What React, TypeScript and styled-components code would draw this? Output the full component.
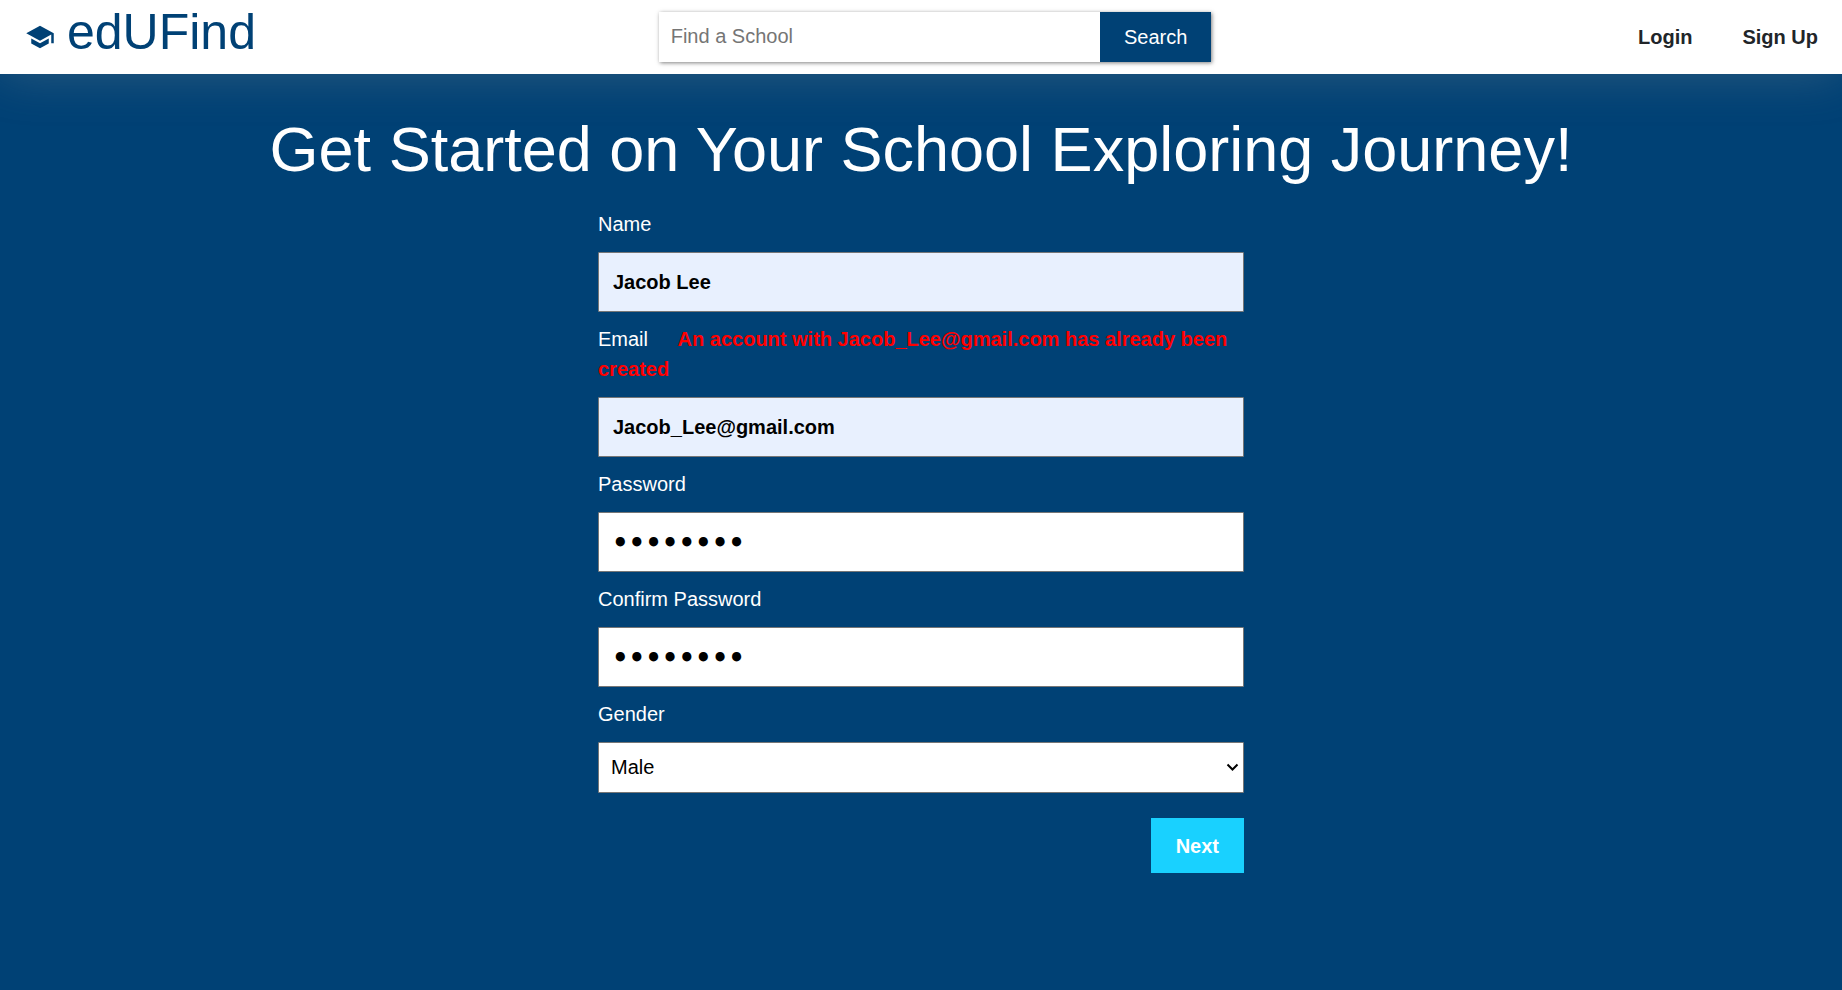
import React from "react";
import styled, { createGlobalStyle } from "styled-components";
import { MdSchool } from "react-icons/md";

const navy = "#004175";
const font = '"Liberation Sans", Arial, Helvetica, sans-serif';

const GlobalStyle = createGlobalStyle`
  *, *::before, *::after { box-sizing: border-box; }
  body {
    margin: 0;
    background: ${navy};
    color: #212529;
    font: 20px/30px ${font};
  }
  button, input, select { font-family: inherit; font-size: inherit; }
`;

const Header = styled.header`
  display: flex;
  align-items: center;
  justify-content: space-between;
  height: 74px;
  background: #fff;
  box-shadow: 0 0 50px rgba(140, 150, 150, 0.32);
`;

const Brand = styled.a`
  display: flex;
  align-items: center;
  gap: 12px;
  padding-left: 25px;
  color: ${navy};
  font-size: 50px;
  line-height: 62px;
  text-decoration: none;

  svg { font-size: 30px; }
`;

const BrandName = styled.span`
  padding-bottom: 10px;
`;

const SearchForm = styled.form`
  display: flex;
  width: 30%;
  height: 50px;
  box-shadow: 1px 1px 4px rgba(0, 0, 0, 0.5);
`;

const SearchInput = styled.input`
  flex: 1;
  min-width: 0;
  padding: 0 12px 2px;
  border: 0;
  background: #fff;

  &::placeholder { color: #757575; }
`;

const SearchButton = styled.button`
  padding: 0 24px;
  border: 0;
  background: ${navy};
  color: #fff;
`;

const Nav = styled.nav`
  display: flex;
  gap: 50px;
  padding: 0 24px;
`;

const NavLink = styled.a`
  color: #212529;
  font-weight: bold;
  text-decoration: none;
`;

const Main = styled.main`
  padding: 27px 20px 60px;
`;

const Title = styled.h1`
  margin: 0 0 12px;
  color: #fff;
  font-size: 63px;
  font-weight: normal;
  line-height: 96px;
  text-align: center;
`;

const Form = styled.form`
  display: flex;
  flex-direction: column;
  gap: 12px;
  max-width: 646px;
  margin: 0 auto;
`;

const Field = styled.div`
  display: flex;
  flex-direction: column;
  gap: 13px;
`;

const Label = styled.label`
  color: #fff;
`;

const ErrorText = styled.strong`
  margin-left: 24px;
  color: #f00;
`;

const Input = styled.input<{ $filled?: boolean }>`
  width: 100%;
  height: 60px;
  padding: 0 14px;
  border: 1px solid #767676;
  border-radius: 1px;
  background: ${(p) => (p.$filled ? "#e8f0fe" : "#fff")};
  color: #000;
  font-weight: bold;
`;

const PasswordInput = styled(Input)`
  padding: 2px 13px 0;
  font-family: "DejaVu Sans", sans-serif;
  font-size: 26px;
`;

const SelectBox = styled.div`
  position: relative;

  svg {
    position: absolute;
    top: 21px;
    right: 5px;
    pointer-events: none;
  }
`;

const Select = styled.select`
  display: block;
  width: 100%;
  height: 51px;
  padding: 0 24px 2px 12px;
  border: 1px solid #767676;
  border-radius: 1px;
  background: #fff;
  color: #000;
  appearance: none;
`;

const NextButton = styled.button`
  align-self: flex-end;
  height: 55px;
  margin-top: 13px;
  padding: 1px 25px 0;
  border: 0;
  background: #19d1ff;
  color: #fff;
  font-weight: bold;
`;

export default function App() {
  return (
    <>
      <GlobalStyle />
      <Header>
        <Brand href="#">
          <MdSchool aria-hidden="true" />
          <BrandName>edUFind</BrandName>
        </Brand>
        <SearchForm role="search">
          <SearchInput type="text" placeholder="Find a School" aria-label="Find a School" />
          <SearchButton type="button">Search</SearchButton>
        </SearchForm>
        <Nav>
          <NavLink href="#login">Login</NavLink>
          <NavLink href="#signup">Sign Up</NavLink>
        </Nav>
      </Header>
      <Main>
        <Title>Get Started on Your School Exploring Journey!</Title>
        <Form>
          <Field>
            <Label htmlFor="name">Name</Label>
            <Input id="name" type="text" defaultValue="Jacob Lee" $filled />
          </Field>
          <Field>
            <Label htmlFor="email">
              Email{" "}
              <ErrorText>An account with Jacob_Lee@gmail.com has already been created</ErrorText>
            </Label>
            <Input id="email" type="email" defaultValue="Jacob_Lee@gmail.com" $filled />
          </Field>
          <Field>
            <Label htmlFor="password">Password</Label>
            <PasswordInput id="password" type="password" defaultValue="explorer" />
          </Field>
          <Field>
            <Label htmlFor="confirm">Confirm Password</Label>
            <PasswordInput id="confirm" type="password" defaultValue="explorer" />
          </Field>
          <Field>
            <Label htmlFor="gender">Gender</Label>
            <SelectBox>
              <Select id="gender" defaultValue="Male">
                <option>Male</option>
                <option>Female</option>
              </Select>
              <svg width="13" height="9" viewBox="0 0 13 9" fill="none" stroke="#000" strokeWidth="2" aria-hidden="true">
                <path d="M1.5 1.5 6.5 6.5 11.5 1.5" />
              </svg>
            </SelectBox>
          </Field>
          <NextButton type="button">Next</NextButton>
        </Form>
      </Main>
    </>
  );
}
